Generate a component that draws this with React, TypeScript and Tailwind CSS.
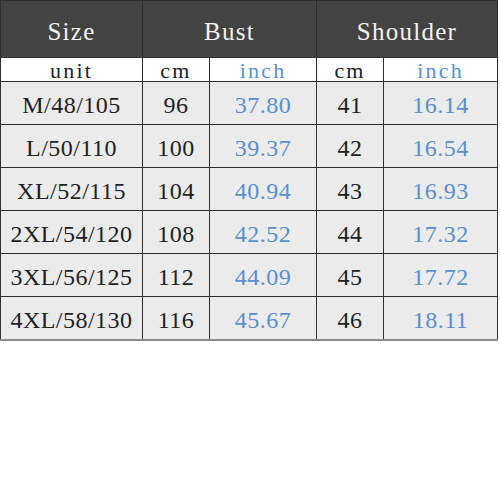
const rows = [
  ["M/48/105", "96", "37.80", "41", "16.14"],
  ["L/50/110", "100", "39.37", "42", "16.54"],
  ["XL/52/115", "104", "40.94", "43", "16.93"],
  ["2XL/54/120", "108", "42.52", "44", "17.32"],
  ["3XL/56/125", "112", "44.09", "45", "17.72"],
  ["4XL/58/130", "116", "45.67", "46", "18.11"],
];

export default function App() {
  return (
    <div className="h-[486px] w-[500px] bg-white font-['Liberation_Serif',serif]">
      <table className="w-[498px] table-fixed border-collapse text-center">
        <colgroup>
          <col className="w-[142px]" />
          <col className="w-[67px]" />
          <col className="w-[107px]" />
          <col className="w-[67px]" />
          <col />
        </colgroup>
        <thead>
          <tr className="h-[57px] bg-[#434343] text-[25px] leading-none tracking-[0.05em] text-[#f2f2f2]">
            <th className="border border-[#2e2e2e] p-0 pt-1 font-normal">Size</th>
            <th colSpan={2} className="border border-[#2e2e2e] p-0 pt-1 font-normal">
              Bust
            </th>
            <th colSpan={2} className="border border-[#2e2e2e] p-0 pt-1 font-normal">
              Shoulder
            </th>
          </tr>
          <tr className="h-[24px] bg-white text-[22px] leading-[20px] tracking-[0.1em]">
            <td className="border border-[#2e2e2e] p-0 pt-0.5 text-[#222]">unit</td>
            <td className="border border-[#2e2e2e] p-0 pt-0.5 text-[#222]">cm</td>
            <td className="border border-[#2e2e2e] p-0 pt-0.5 text-[#5b8fcf]">inch</td>
            <td className="border border-[#2e2e2e] p-0 pt-0.5 text-[#222]">cm</td>
            <td className="border border-[#2e2e2e] p-0 pt-0.5 text-[#5b8fcf]">inch</td>
          </tr>
        </thead>
        <tbody>
          {rows.map((r, i) => (
            <tr
              key={r[0]}
              className={
                i === rows.length - 1
                  ? "h-[43px] border-b-2 border-b-[#8a8a8a] bg-[#ebebeb] text-[24px] leading-none tracking-[0.02em]"
                  : "h-[43px] bg-[#ebebeb] text-[24px] leading-none tracking-[0.02em]"
              }
            >
              <td className="border border-[#2e2e2e] p-0 pt-1 text-[#222]">{r[0]}</td>
              <td className="border border-[#2e2e2e] p-0 pt-1 text-[#222]">{r[1]}</td>
              <td className="border border-[#2e2e2e] p-0 pt-1 text-[#5b8fcf]">{r[2]}</td>
              <td className="border border-[#2e2e2e] p-0 pt-1 text-[#222]">{r[3]}</td>
              <td className="border border-[#2e2e2e] p-0 pt-1 text-[#5b8fcf]">{r[4]}</td>
            </tr>
          ))}
        </tbody>
      </table>
    </div>
  );
}
